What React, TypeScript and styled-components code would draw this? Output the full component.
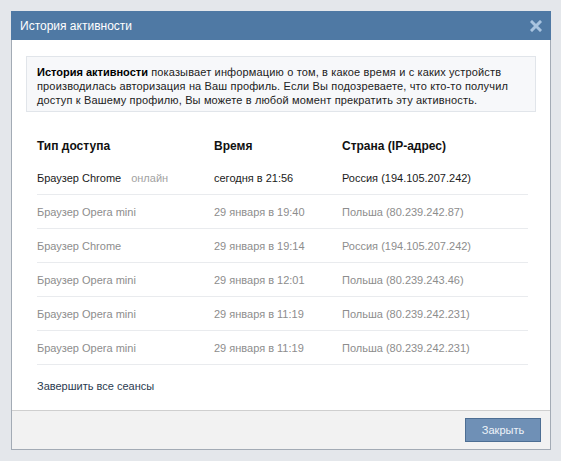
import styled, { createGlobalStyle } from 'styled-components';

const GlobalStyle = createGlobalStyle`
  html, body {
    margin: 0;
    padding: 0;
    background: #e4e7eb;
  }
  body {
    font-family: "Liberation Sans", Arial, sans-serif;
    font-size: 11px;
    color: #222;
  }
`;

type Session = {
  agent: string;
  online?: boolean;
  time: string;
  place: string;
};

const sessions: Session[] = [
  { agent: 'Браузер Chrome', online: true, time: 'сегодня в 21:56', place: 'Россия (194.105.207.242)' },
  { agent: 'Браузер Opera mini', time: '29 января в 19:40', place: 'Польша (80.239.242.87)' },
  { agent: 'Браузер Chrome', time: '29 января в 19:14', place: 'Россия (194.105.207.242)' },
  { agent: 'Браузер Opera mini', time: '29 января в 12:01', place: 'Польша (80.239.243.46)' },
  { agent: 'Браузер Opera mini', time: '29 января в 11:19', place: 'Польша (80.239.242.231)' },
  { agent: 'Браузер Opera mini', time: '29 января в 11:19', place: 'Польша (80.239.242.231)' },
];

const CloseIcon = () => (
  <svg width="12" height="12" viewBox="0 0 12 12">
    <path d="M2 2 L10 10 M10 2 L2 10" stroke="#a9c4e0" strokeWidth="3" strokeLinecap="square" />
  </svg>
);

const App = () => (
  <>
    <GlobalStyle />
    <Backdrop>
      <Dialog>
        <Header>
          <Title>История активности</Title>
          <CloseButton>
            <CloseIcon />
          </CloseButton>
        </Header>
        <Body>
          <InfoBox>
            <b>История активности</b> показывает информацию о том, в какое время и с каких устройств
            производилась авторизация на Ваш профиль. Если Вы подозреваете, что кто-то получил
            доступ к Вашему профилю, Вы можете в любой момент прекратить эту активность.
          </InfoBox>
          <Table>
            <HeadRow>
              <span>Тип доступа</span>
              <span>Время</span>
              <span>Страна (IP-адрес)</span>
            </HeadRow>
            {sessions.map((s, i) => (
              <Row key={i} $current={!!s.online}>
                <span>
                  {s.agent}
                  {s.online && <Online>онлайн</Online>}
                </span>
                <span>{s.time}</span>
                <span>{s.place}</span>
              </Row>
            ))}
          </Table>
          <EndLink>Завершить все сеансы</EndLink>
        </Body>
        <Footer>
          <Button>Закрыть</Button>
        </Footer>
      </Dialog>
    </Backdrop>
  </>
);

const Backdrop = styled.div`
  width: 561px;
  height: 461px;
  box-sizing: border-box;
  padding: 11px 10px 11px 11px;
  background: #e4e7eb;
`;

const Dialog = styled.div`
  width: 540px;
  height: 439px;
  box-sizing: border-box;
  border: 1px solid #a3abb5;
  border-top: none;
  background: #fff;
  display: flex;
  flex-direction: column;
`;

const Header = styled.div`
  height: 29px;
  margin: 0 -1px;
  background: #4f79a4;
  display: flex;
  align-items: center;
  justify-content: space-between;
  padding: 0 8px 0 9px;
`;

const Title = styled.div`
  color: #fff;
  font-size: 12px;
`;

const CloseButton = styled.div`
  display: flex;
  align-items: center;
  justify-content: center;
  width: 14px;
  height: 14px;
  margin-top: 1px;
`;

const Body = styled.div`
  flex: 1;
  padding: 16px 14px 0 14px;
`;

const InfoBox = styled.div`
  background: #f7f8fa;
  border: 1px solid #e1e5ea;
  padding: 8px 10px 4px 10px;
  line-height: 14px;
  letter-spacing: 0.15px;
  color: #222;

  b {
    font-weight: bold;
    color: #000;
    letter-spacing: 0;
  }
`;

const Table = styled.div`
  margin: 19px 0 0 11px;
  width: 491px;
`;

const HeadRow = styled.div`
  display: grid;
  grid-template-columns: 177px 128px 1fr;
  height: 30px;
  align-items: center;
  font-size: 12px;
  font-weight: bold;
  color: #111;
`;

const Row = styled.div<{ $current: boolean }>`
  display: grid;
  grid-template-columns: 177px 128px 1fr;
  height: 33px;
  align-items: center;
  border-bottom: 1px solid #e9ebee;
  color: ${p => (p.$current ? '#1a1a1a' : '#8d8d8d')};
`;

const Online = styled.span`
  color: #a2a2a2;
  margin-left: 10px;
`;

const EndLink = styled.div`
  margin: 14px 0 0 11px;
  line-height: 14px;
  color: #2b3b50;
  cursor: pointer;
`;

const Footer = styled.div`
  height: 39px;
  border-top: 1px solid #cfcfcf;
  background: #f2f2f2;
  display: flex;
  justify-content: flex-end;
  align-items: flex-start;
  padding: 7px 9px 0 0;
  box-sizing: border-box;
`;

const Button = styled.div`
  width: 76px;
  height: 24px;
  box-sizing: border-box;
  border: 1px solid #4d6e93;
  background: #6f90b6;
  color: #eef3f9;
  font-size: 11px;
  display: flex;
  align-items: center;
  justify-content: center;
`;

export default App;
